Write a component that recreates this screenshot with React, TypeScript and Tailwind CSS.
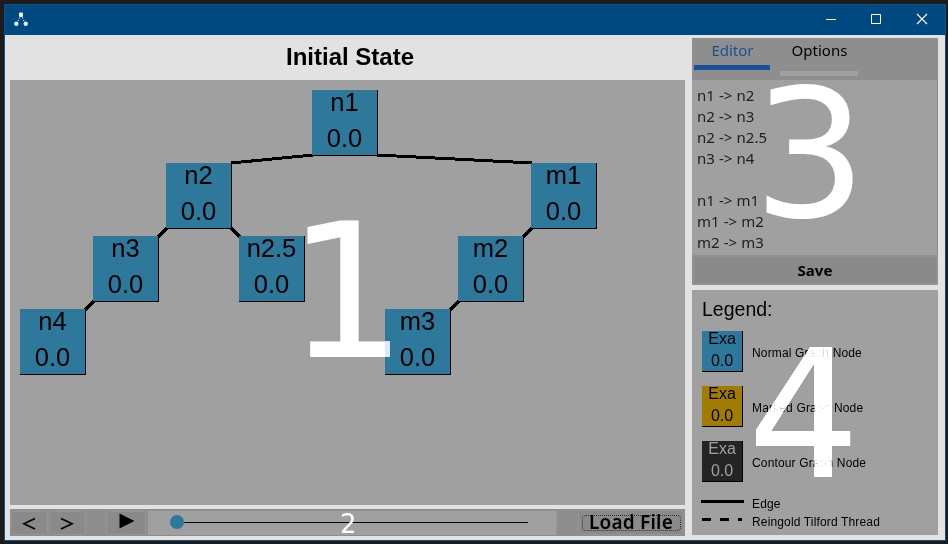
import React from "react";

type TreeNode = { label: string; x: number; y: number };

const nodes: TreeNode[] = [
  { label: "n1", x: 302, y: 10 },
  { label: "n2", x: 156, y: 83 },
  { label: "m1", x: 521, y: 83 },
  { label: "n3", x: 83, y: 156 },
  { label: "n2.5", x: 229, y: 156 },
  { label: "m2", x: 448, y: 156 },
  { label: "n4", x: 10, y: 229 },
  { label: "m3", x: 375, y: 229 },
];

const edges = [
  [303, 75, 221, 83],
  [367, 75, 522, 83],
  [157, 148, 148, 157],
  [221, 148, 230, 157],
  [522, 148, 513, 157],
  [84, 221, 75, 230],
  [449, 221, 440, 230],
];

const source = ["n1 -> n2", "n2 -> n3", "n2 -> n2.5", "n3 -> n4", "", "n1 -> m1", "m1 -> m2", "m2 -> m3"];

function TitleBar() {
  return (
    <header className="flex h-[30px] shrink-0 items-center justify-between bg-[#004880]">
      <svg width="16" height="16" className="ml-2 mt-[-1px]" viewBox="0 0 16 16">
        <path d="M8 3L3.5 12M8 3L12.5 12" stroke="#fff" strokeWidth="1" strokeDasharray="1.2 1.6" />
        <rect x="6" y="0.5" width="4" height="4.5" rx="1" fill="#e8faff" />
        <circle cx="3.3" cy="11.8" r="2.2" fill="#d4f5ff" />
        <circle cx="12.7" cy="11.8" r="2.2" fill="#d4f5ff" />
        <rect x="2.5" y="10.5" width="2" height="2.5" fill="#fff" />
        <rect x="11.8" y="10.5" width="2" height="2.5" fill="#fff" />
      </svg>
      <svg width="110" height="12" className="mr-[14px] mt-[-2px]" viewBox="0 0 110 12" fill="none" stroke="#fff">
        <path d="M5 6.5H15" />
        <path d="M50.5 1.5H59.5V10.5H50.5Z" />
        <path d="M96 1L106 11M106 1L96 11" strokeWidth="1.1" />
      </svg>
    </header>
  );
}

function Tree() {
  return (
    <section className="relative h-[425px] w-[675px] bg-[#a0a0a0]">
      <svg width="675" height="425" className="absolute inset-0" stroke="#000" strokeWidth="3" shapeRendering="crispEdges">
        {edges.map(([x1, y1, x2, y2], i) => (
          <line key={i} x1={x1} y1={y1} x2={x2} y2={y2} />
        ))}
      </svg>
      {nodes.map((n) => (
        <div
          key={n.label}
          className="absolute h-[66px] w-[66px] border-b border-r border-black bg-[#2e789c] text-center text-[25.5px] leading-[36px]"
          style={{ left: n.x, top: n.y }}
        >
          <div className="-mt-[6px]">{n.label}</div>
          <div>0.0</div>
        </div>
      ))}
      <span className="absolute left-[277px] top-[103px] font-['DejaVu_Sans',sans-serif] text-[187px] leading-[218px] text-white">
        1
      </span>
      <div className="absolute left-[375px] top-[261px] h-4 w-[5px] bg-[#dbeaff]" />
    </section>
  );
}

function Controls() {
  const button = "flex items-center justify-center rounded-[3px] border border-[#959595] bg-[#8a8a8a]";
  return (
    <footer className="mt-1 flex h-[27px] w-[675px] items-center bg-[#8e8e8e] pl-px">
      <button className={`${button} h-[24px] w-[37px]`}>
        <svg width="14" height="13" className="-ml-0.5 mt-px" fill="none" stroke="#000" strokeWidth="1.7"><path d="M13 1.5L2 6.7L13 12" /></svg>
      </button>
      <button className={`${button} ml-px h-[24px] w-[37px]`}>
        <svg width="14" height="13" className="-ml-0.5 mt-px" fill="none" stroke="#000" strokeWidth="1.7"><path d="M1 1.5L12 6.7L1 12" /></svg>
      </button>
      <button className={`${button} ml-5 h-[24px] w-[40px]`}>
        <svg width="16" height="16" className="-mt-[3px] ml-px"><path d="M0.5 0.5L15.5 8L0.5 15.5Z" /></svg>
      </button>
      <div className="relative ml-[2px] flex h-6 w-[409px] items-center border-r border-[#999] bg-[#a0a0a0] pl-[22px]">
        <div className="-mt-px h-[14px] w-[14px] shrink-0 rounded-full bg-[#2e789c]" />
        <div className="h-px w-[344px] bg-black" />
        <span className="absolute left-[192px] top-px font-['DejaVu_Sans',sans-serif] text-[26px] leading-6 text-white">2</span>
      </div>
      <button className={`${button} ml-[21px] h-[25px] w-[106px]`}>
        <span className="flex h-4 w-[99px] items-center justify-center whitespace-nowrap rounded-sm border border-dotted border-[#303030] font-['Noto_Sans',sans-serif] text-[19px] font-semibold leading-4 tracking-[0.2px]">
          <span className="-mt-0.5">Load File</span>
        </span>
      </button>
    </footer>
  );
}

function Editor() {
  return (
    <section className="relative flex h-[247px] w-[246px] flex-col bg-[#a0a0a0] font-['Noto_Sans',sans-serif] text-[15px]">
      <nav className="flex h-[42px] shrink-0 gap-[10px] bg-[#8e8e8e] pl-[2px]">
        <div className="h-[32px] w-[76px] border-b-[5px] border-[#16509a] pl-px text-center leading-[25px] text-[#16509a]">Editor</div>
        <div className="h-[38px] w-[78px] border-b-[5px] border-[#a0a0a0] pl-px text-center leading-[25px] text-black">Options</div>
      </nav>
      <div className="h-[175px] border-r border-[#8e8e8e] pl-[5px] pt-[5px] tracking-[0.06px] text-[#202020]">
        {source.map((line, i) => (
          <div key={i} className="h-[21px] whitespace-nowrap leading-[21px]">{line}</div>
        ))}
      </div>
      <button className="h-[30px] rounded-[3px] border-2 border-[#919191] bg-[#8a8a8a] pb-px text-[15px] font-bold leading-[24px] text-black">Save</button>
      <span className="absolute left-[61px] top-[11px] font-['DejaVu_Sans',sans-serif] text-[179px] leading-[210px] text-white">3</span>
    </section>
  );
}

function LegendNode({ label, color }: { label: string; color: string }) {
  return (
    <div className="mb-[14px] flex h-[41px] items-center">
      <div className={`h-[41px] w-[41px] border-b border-r border-black text-center text-[16px] font-light leading-[22px] ${color}`}>
        <div className="-mt-[3px]">Exa</div>
        <div>0.0</div>
      </div>
      <span className="ml-[9px] mt-[3px] whitespace-nowrap text-[12px] tracking-[0.15px]">{label}</span>
    </div>
  );
}

function Legend() {
  return (
    <section className="relative mt-[5px] h-[245px] w-[246px] bg-[#a0a0a0] pl-[10px] pt-2">
      <h2 className="h-[33px] text-[19.5px] leading-[23px]">Legend:</h2>
      <LegendNode label="Normal Graph Node" color="bg-[#2e789c]" />
      <LegendNode label="Marked Graph Node" color="bg-[#a07c00]" />
      <LegendNode label="Contour Graph Node" color="bg-[#242424] text-[#a0a0a0]" />
      <div className="-ml-px -mt-[3px] flex h-[18px] items-center text-[12px] tracking-[0.15px]">
        <svg width="43" height="4"><path d="M0 1.5H43" stroke="#000" strokeWidth="3" /></svg>
        <span className="ml-[8px] mt-1">Edge</span>
      </div>
      <div className="-ml-px flex h-[18px] items-center text-[12px] tracking-[0.15px]">
        <svg width="43" height="4"><path d="M1 1.5H41" stroke="#000" strokeWidth="3" strokeDasharray="9 9" /></svg>
        <span className="ml-[8px] mt-1">Reingold Tilford Thread</span>
      </div>
      <span className="absolute left-[56px] top-[23px] font-['DejaVu_Sans',sans-serif] text-[176px] leading-[206px] text-[#cccccc] mix-blend-plus-lighter">4</span>
    </section>
  );
}

export default function App() {
  return (
    <div className="h-[544px] w-[948px] overflow-hidden bg-[#1b1b1b] pl-1 pt-1 font-['Liberation_Sans',Arial,sans-serif] text-black">
      <div className="flex h-[537px] w-[942px] flex-col border border-[#0c508a] bg-[#e2e2e2]">
        <TitleBar />
        <div className="flex gap-[7px] pl-[5px]">
          <main className="w-[675px]">
            <h1 className="flex h-[45px] items-center justify-center pb-0.5 pl-[5px] text-[24px] font-bold">Initial State</h1>
            <Tree />
            <Controls />
          </main>
          <aside className="pt-[3px]">
            <Editor />
            <Legend />
          </aside>
        </div>
      </div>
    </div>
  );
}
